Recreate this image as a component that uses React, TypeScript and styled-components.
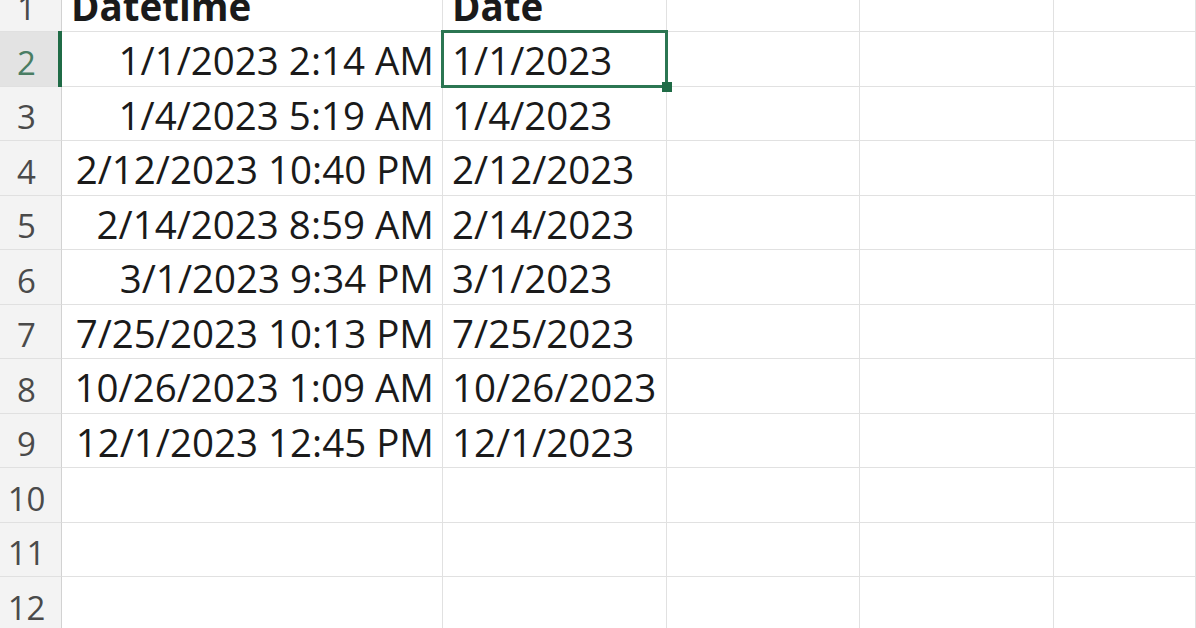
import React from "react";
import styled, { createGlobalStyle, css } from "styled-components";

const GlobalStyle = createGlobalStyle`
  html, body {
    margin: 0;
    padding: 0;
    background: #ffffff;
    overflow: hidden;
  }
  body {
    width: 1196px;
    height: 628px;
  }
`;

const ROW_H = 54.5;

const Sheet = styled.div`
  display: grid;
  grid-template-columns: 62px 381px 224px 193px 194px 1fr;
  grid-auto-rows: ${ROW_H}px;
  margin-top: -22.5px;
  width: 1196px;
  font-family: "Open Sans", "Noto Sans", sans-serif;
  color: #1a1a1a;
`;

const RowHeader = styled.div<{ $active?: boolean }>`
  display: flex;
  align-items: flex-end;
  justify-content: center;
  padding: 0 8px 7px 0;
  box-sizing: border-box;
  background: ${(p) => (p.$active ? "#e3e3e3" : "#f3f3f3")};
  border-bottom: 1px solid #e0e0e0;
  border-right: 1px solid #d2d2d2;
  font-size: 33px;
  line-height: 1;
  color: ${(p) => (p.$active ? "#4a7d63" : "#4a4a4a")};
  position: relative;
  ${(p) =>
    p.$active &&
    css`
      &::after {
        content: "";
        position: absolute;
        right: -1px;
        top: -1px;
        bottom: -1px;
        width: 4px;
        background: #1f6b46;
      }
    `}
`;

const Cell = styled.div<{ $align?: "left" | "right"; $bold?: boolean }>`
  display: flex;
  align-items: flex-end;
  justify-content: ${(p) => (p.$align === "right" ? "flex-end" : "flex-start")};
  padding: ${(p) => (p.$align === "right" ? "0 8px 6px 0" : "0 0 6px 9px")};
  box-sizing: border-box;
  border-bottom: 1px solid #e1e1e1;
  border-right: 1px solid #e1e1e1;
  font-size: 38.5px;
  font-weight: ${(p) => (p.$bold ? 700 : 400)};
  line-height: 1;
  white-space: nowrap;
  overflow: visible;
  position: relative;
`;

const SelectedCell = styled(Cell)`
  z-index: 1;
  &::before {
    content: "";
    position: absolute;
    left: -2px;
    top: -2px;
    right: -2px;
    bottom: -2px;
    border: 3px solid #2b7652;
    pointer-events: none;
  }
`;

const FillHandle = styled.span`
  position: absolute;
  right: -6px;
  bottom: -6px;
  width: 10px;
  height: 10px;
  background: #1f6b46;
  z-index: 2;
`;

const rows: [string, string][] = [
  ["1/1/2023 2:14 AM", "1/1/2023"],
  ["1/4/2023 5:19 AM", "1/4/2023"],
  ["2/12/2023 10:40 PM", "2/12/2023"],
  ["2/14/2023 8:59 AM", "2/14/2023"],
  ["3/1/2023 9:34 PM", "3/1/2023"],
  ["7/25/2023 10:13 PM", "7/25/2023"],
  ["10/26/2023 1:09 AM", "10/26/2023"],
  ["12/1/2023 12:45 PM", "12/1/2023"],
];

const emptyRows = [10, 11, 12];

export default function App() {
  return (
    <>
      <GlobalStyle />
      <Sheet>
        <RowHeader>1</RowHeader>
        <Cell $bold>Datetime</Cell>
        <Cell $bold>Date</Cell>
        <Cell />
        <Cell />
        <Cell />

        {rows.map(([dt, d], i) => {
          const n = i + 2;
          const active = n === 2;
          return (
            <React.Fragment key={n}>
              <RowHeader $active={active}>{n}</RowHeader>
              <Cell $align="right">{dt}</Cell>
              {active ? (
                <SelectedCell>
                  {d}
                  <FillHandle />
                </SelectedCell>
              ) : (
                <Cell>{d}</Cell>
              )}
              <Cell />
              <Cell />
              <Cell />
            </React.Fragment>
          );
        })}

        {emptyRows.map((n) => (
          <React.Fragment key={n}>
            <RowHeader>{n}</RowHeader>
            <Cell />
            <Cell />
            <Cell />
            <Cell />
            <Cell />
          </React.Fragment>
        ))}
      </Sheet>
    </>
  );
}
